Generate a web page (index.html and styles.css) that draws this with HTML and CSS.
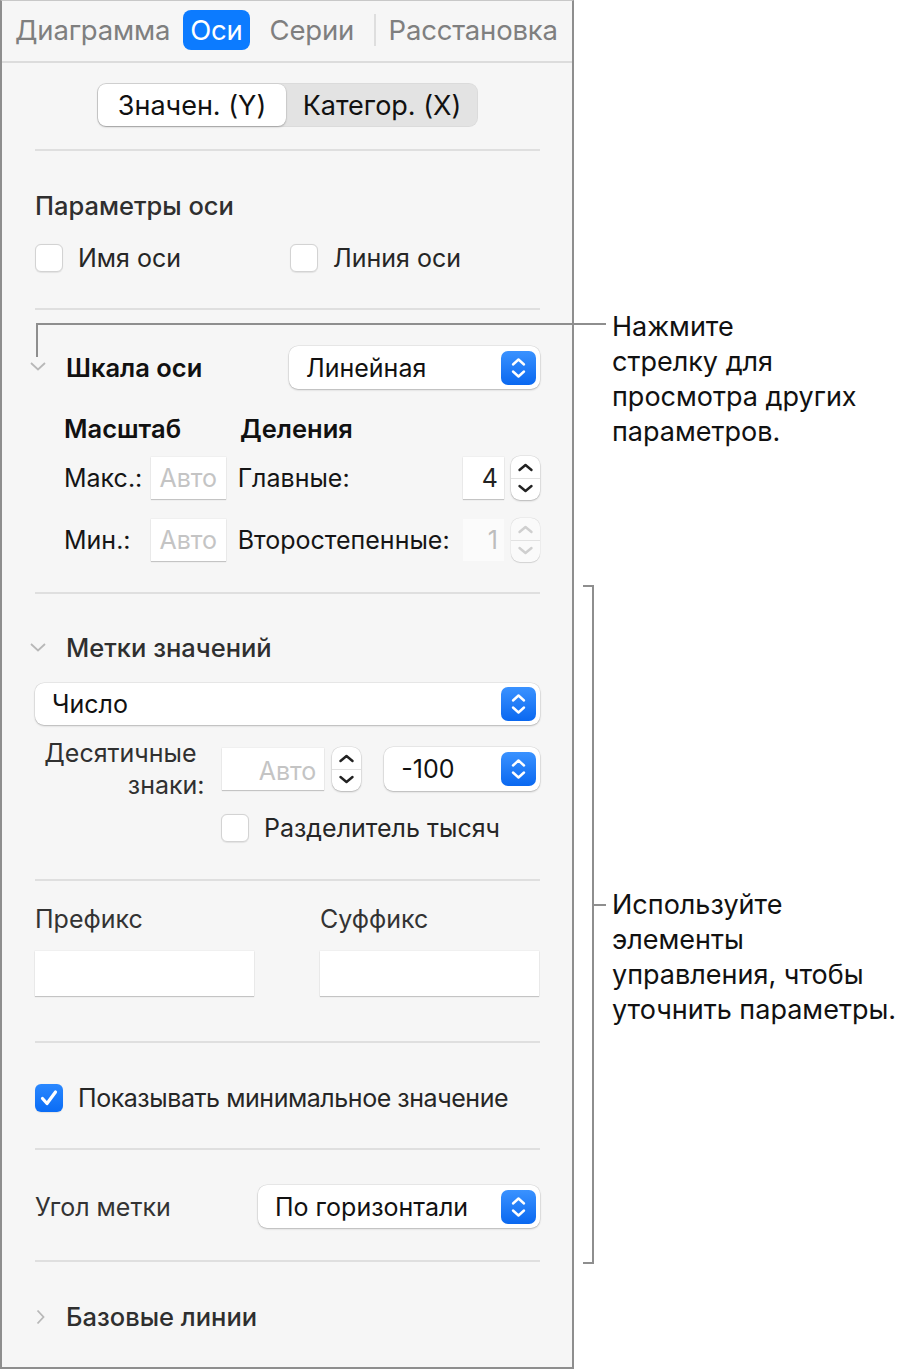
FILE: index.html
```html
<!DOCTYPE html>
<html lang="ru">
<head>
<meta charset="utf-8">
<title>Оси</title>
<link rel="stylesheet" href="styles.css">
</head>
<body>
<div class="page">
  <div class="panel">
    <div class="tabs">
      <span class="tab t1">Диаграмма</span>
      <span class="tab active">Оси</span>
      <span class="tab t3">Серии</span>
      <span class="tab-sep"></span>
      <span class="tab t4">Расстановка</span>
    </div>
    <div class="body">
      <div class="seg">
        <span class="seg-item on">Значен. (Y)</span>
        <span class="seg-item">Категор. (X)</span>
      </div>
      <div class="divider d-seg"></div>

      <div class="heading h-params">Параметры оси</div>
      <div class="check-row">
        <span class="check"><span class="box"></span>Имя оси</span>
        <span class="check c-right"><span class="box"></span>Линия оси</span>
      </div>
      <div class="divider d-params"></div>

      <div class="disc-row scale-row">
        <span class="chev-down"><svg width="16" height="9" viewBox="0 0 16 9"><path d="M1 1 L8 7.5 L15 1" fill="none" stroke="#b8b8b8" stroke-width="1.8"/></svg></span>
        <span class="bold-label">Шкала оси</span>
        <div class="popup pop-scale"><span class="pop-text">Линейная</span><span class="pop-btn"><svg width="35" height="34" viewBox="0 0 35 34"><path d="M12 13.5 L17.5 8.5 L23 13.5 M12 20.5 L17.5 25.5 L23 20.5" fill="none" stroke="#fff" stroke-width="2.4" stroke-linecap="round" stroke-linejoin="round"/></svg></span></div>
      </div>

      <div class="grid-head">
        <span class="bold-label gh1">Масштаб</span>
        <span class="bold-label">Деления</span>
      </div>
      <div class="num-row r-max">
        <span class="lbl l-short">Макс.:</span>
        <span class="field f-auto">Авто</span>
        <span class="lbl l-long">Главные:</span>
        <span class="field f-num">4</span>
        <span class="stepper"><svg width="29" height="44" viewBox="0 0 29 44"><path d="M8.5 14 L14.5 9 L20.5 14 M8.5 30 L14.5 35 L20.5 30" fill="none" stroke="#222" stroke-width="2.4" stroke-linecap="round" stroke-linejoin="round"/></svg></span>
      </div>
      <div class="num-row r-min">
        <span class="lbl l-short">Мин.:</span>
        <span class="field f-auto">Авто</span>
        <span class="lbl l-long">Второстепенные:</span>
        <span class="field f-num dis">1</span>
        <span class="stepper dis"><svg width="29" height="44" viewBox="0 0 29 44"><path d="M8.5 14 L14.5 9 L20.5 14 M8.5 30 L14.5 35 L20.5 30" fill="none" stroke="#cfcfcf" stroke-width="2.4" stroke-linecap="round" stroke-linejoin="round"/></svg></span>
      </div>
      <div class="divider d-scale"></div>

      <div class="disc-row labels-row">
        <span class="chev-down"><svg width="16" height="9" viewBox="0 0 16 9"><path d="M1 1 L8 7.5 L15 1" fill="none" stroke="#b8b8b8" stroke-width="1.8"/></svg></span>
        <span class="heading">Метки значений</span>
      </div>
      <div class="popup pop-number"><span class="pop-text">Число</span><span class="pop-btn"><svg width="35" height="34" viewBox="0 0 35 34"><path d="M12 13.5 L17.5 8.5 L23 13.5 M12 20.5 L17.5 25.5 L23 20.5" fill="none" stroke="#fff" stroke-width="2.4" stroke-linecap="round" stroke-linejoin="round"/></svg></span></div>

      <div class="dec-row">
        <span class="dec-label"><span class="dec-l1">Десятичные</span><span class="dec-l2">знаки:</span></span>
        <span class="field f-dec">Авто</span>
        <span class="stepper st-dec"><svg width="29" height="44" viewBox="0 0 29 44"><path d="M8.5 14 L14.5 9 L20.5 14 M8.5 30 L14.5 35 L20.5 30" fill="none" stroke="#222" stroke-width="2.4" stroke-linecap="round" stroke-linejoin="round"/></svg></span>
        <div class="popup pop-neg"><span class="pop-text">-100</span><span class="pop-btn"><svg width="35" height="34" viewBox="0 0 35 34"><path d="M12 13.5 L17.5 8.5 L23 13.5 M12 20.5 L17.5 25.5 L23 20.5" fill="none" stroke="#fff" stroke-width="2.4" stroke-linecap="round" stroke-linejoin="round"/></svg></span></div>
      </div>
      <div class="check-row thousands">
        <span class="check"><span class="box"></span>Разделитель тысяч</span>
      </div>
      <div class="divider d-dec"></div>

      <div class="fix-grid">
        <span class="plain-label">Префикс</span>
        <span class="plain-label">Суффикс</span>
        <span class="field f-wide"></span>
        <span class="field f-wide"></span>
      </div>
      <div class="divider d-fix"></div>

      <div class="check-row showmin">
        <span class="check"><span class="box on"><svg width="28" height="28" viewBox="0 0 28 28"><path d="M7.5 14.5 L12 19.5 L20.5 8" fill="none" stroke="#fff" stroke-width="3.2" stroke-linecap="round" stroke-linejoin="round"/></svg></span>Показывать минимальное значение</span>
      </div>
      <div class="divider d-min"></div>

      <div class="angle-row">
        <span class="plain-label">Угол метки</span>
        <div class="popup pop-angle"><span class="pop-text">По горизонтали</span><span class="pop-btn"><svg width="35" height="34" viewBox="0 0 35 34"><path d="M12 13.5 L17.5 8.5 L23 13.5 M12 20.5 L17.5 25.5 L23 20.5" fill="none" stroke="#fff" stroke-width="2.4" stroke-linecap="round" stroke-linejoin="round"/></svg></span></div>
      </div>
      <div class="divider d-angle"></div>

      <div class="disc-row base-row">
        <span class="chev-right"><svg width="9" height="16" viewBox="0 0 9 16"><path d="M1.5 1.5 L7.5 8 L1.5 14.5" fill="none" stroke="#b8b8b8" stroke-width="1.8"/></svg></span>
        <span class="heading">Базовые линии</span>
      </div>
    </div>
  </div>

  <div class="callout-line"></div>
  <div class="note note-top">Нажмите<br>стрелку для<br>просмотра других<br>параметров.</div>

  <div class="bracket"></div>
  <div class="bracket-tick"></div>
  <div class="note note-bottom">Используйте<br>элементы<br>управления, чтобы<br>уточнить параметры.</div>
</div>
</body>
</html>
```

FILE: styles.css
```css
html, body {
  margin: 0;
  padding: 0;
  background: #ffffff;
}

body {
  font-family: Inter, "Noto Sans", "Liberation Sans", sans-serif;
  color: #1a1a1a;
}

.page {
  position: relative;
  width: 910px;
  height: 1370px;
}

.panel {
  box-sizing: border-box;
  width: 574px;
  height: 1369px;
  background: #f6f6f6;
  border: 2px solid #8e8e8e;
  border-top: 1px solid #c8c8c8;
}

/* ---------- tabs ---------- */
.tabs {
  height: 62px;
  box-sizing: border-box;
  padding: 0 0 3px 13px;
  border-bottom: 2px solid #dcdcdc;
  display: flex;
  align-items: center;
}

.tab {
  font-size: 27.5px;
  color: #7f7f7f;
  letter-spacing: -0.2px;
}

.tab.active {
  margin-left: 13px;
  background: #0c7bff;
  color: #ffffff;
  border-radius: 8px;
  height: 40px;
  line-height: 40px;
  padding: 0 7px;
}

.tab.t3 {
  margin-left: 20px;
}

.tab-sep {
  width: 1.5px;
  height: 32px;
  background: #dedede;
  margin-left: 20px;
}

.tab.t4 {
  margin-left: 13px;
}

/* ---------- body ---------- */
.body {
  padding: 0 32px 0 33px;
}

.seg {
  margin: 20px auto 0;
  width: 381px;
  height: 44px;
  background: #e3e3e3;
  border-radius: 9px;
  display: flex;
  box-shadow: inset 0 0 0 1px rgba(0,0,0,0.03);
}

.seg-item {
  flex: 1 1 0;
  display: flex;
  align-items: center;
  justify-content: center;
  font-size: 27px;
  color: #111;
}

.seg-item.on {
  flex: 0 0 188px;
  background: #ffffff;
  border-radius: 8px;
  margin: 1px 0 1px 1px;
  box-shadow: 0 1px 2px rgba(0,0,0,0.25), 0 0 0 0.5px rgba(0,0,0,0.08);
}

.divider {
  height: 2px;
  background: #dfdfdf;
}

.d-seg { margin-top: 22px; }
.d-params { margin-top: 35px; }
.d-scale { margin-top: 31px; }
.d-dec { margin-top: 36px; }
.d-fix { margin-top: 45px; }
.d-min { margin-top: 35px; }
.d-angle { margin-top: 32px; }

.heading {
  font-size: 25.5px;
  font-weight: 500;
  color: #2f2f2f;
  line-height: 30px;
}

.h-params {
  margin-top: 40px;
}

.check-row {
  display: flex;
  align-items: center;
  height: 30px;
  margin-top: 22px;
}

.check {
  display: inline-flex;
  align-items: center;
  font-size: 25px;
  color: #262626;
}

.c-right {
  margin-left: 109px;
}

.box {
  box-sizing: border-box;
  width: 28px;
  height: 28px;
  border-radius: 6px;
  background: #ffffff;
  border: 1px solid #d3d3d3;
  box-shadow: 0 0.5px 1px rgba(0,0,0,0.08);
  margin-right: 15px;
  display: inline-flex;
}

.box.on {
  background: linear-gradient(#2a88ff, #0a6cf5);
  border: none;
}

/* disclosure rows */
.disc-row {
  display: flex;
  align-items: center;
  margin-left: -5px;
}

.chev-down {
  width: 16px;
  display: inline-flex;
  margin-right: 20px;
  margin-top: -2px;
}

.chev-right {
  width: 9px;
  display: inline-flex;
  margin-left: 6px;
  margin-right: 21px;
}

.scale-row {
  margin-top: 36px;
  height: 43px;
}

.bold-label {
  font-size: 25px;
  font-weight: 600;
  color: #111;
}

.scale-row .bold-label {
  font-size: 25.5px;
}

.popup {
  box-sizing: border-box;
  height: 43px;
  background: #ffffff;
  border-radius: 9px;
  box-shadow: 0 1px 2px rgba(0,0,0,0.22), 0 0 0 0.5px rgba(0,0,0,0.1);
  display: flex;
  align-items: center;
  justify-content: space-between;
  padding-left: 17px;
  padding-right: 4px;
}

.pop-text {
  font-size: 25px;
  color: #111;
}

.pop-btn {
  width: 35px;
  height: 34px;
  border-radius: 7px;
  background: linear-gradient(#3a92ff, #0a68f0);
  display: inline-flex;
}

.pop-scale {
  margin-left: auto;
  width: 251px;
}

.grid-head {
  display: flex;
  align-items: center;
  height: 30px;
  margin-top: 24px;
  padding-left: 29px;
}

.grid-head .bold-label {
  font-size: 25.5px;
}

.gh1 {
  width: 176px;
}

.num-row {
  display: flex;
  align-items: center;
  height: 42px;
  padding-left: 29px;
}

.r-max { margin-top: 14px; }
.r-min { margin-top: 20px; }

.lbl {
  font-size: 25px;
  color: #151515;
}

.l-short {
  width: 87px;
}

.l-long {
  margin-left: 12px;
  width: 226px;
}

.field {
  box-sizing: border-box;
  height: 42px;
  background: #ffffff;
  box-shadow: 0 1px 1px rgba(0,0,0,0.18), 0 0 0 0.5px rgba(0,0,0,0.05);
  font-size: 25px;
  display: inline-flex;
  align-items: center;
}

.f-auto {
  width: 75px;
  justify-content: center;
  color: #c4c4c4;
}

.f-num {
  width: 41px;
  justify-content: flex-end;
  padding-right: 6px;
  color: #222;
}

.f-num.dis {
  color: #bdbdbd;
  background: #fbfbfb;
  box-shadow: none;
}

.stepper {
  box-sizing: border-box;
  width: 29px;
  height: 44px;
  margin-left: 7px;
  border-radius: 9px;
  background: #ffffff;
  box-shadow: 0 1px 2px rgba(0,0,0,0.22), 0 0 0 0.5px rgba(0,0,0,0.1);
  position: relative;
  display: inline-flex;
}

.stepper::after {
  content: "";
  position: absolute;
  left: 0;
  right: 0;
  top: 21.5px;
  height: 1px;
  background: #e2e2e2;
}

.stepper.dis {
  background: #fafafa;
  box-shadow: 0 0.5px 1px rgba(0,0,0,0.12), 0 0 0 0.5px rgba(0,0,0,0.06);
}

.labels-row {
  margin-top: 39px;
  height: 30px;
}

.pop-number {
  margin-top: 20px;
  width: 505px;
  height: 42px;
}

.dec-row {
  display: flex;
  align-items: center;
  margin-top: 22px;
  height: 44px;
}

.dec-label {
  width: 170px;
  display: flex;
  flex-direction: column;
  align-items: flex-end;
  font-size: 25px;
  line-height: 32px;
  color: #303030;
}

.dec-l1 {
  margin-right: 8px;
}

.f-dec {
  margin-left: 17px;
  width: 103px;
  justify-content: flex-end;
  padding: 4px 8px 0 0;
  color: #c4c4c4;
}

.st-dec {
  margin-left: 8px;
}

.pop-neg {
  margin-left: 23px;
  width: 156px;
  height: 44px;
}

.thousands {
  padding-left: 186px;
}

.fix-grid {
  display: grid;
  grid-template-columns: 219px 219px;
  column-gap: 66px;
  grid-template-rows: 30px 45px;
  row-gap: 17px;
  margin-top: 23px;
}

.plain-label {
  font-size: 25px;
  color: #333;
  line-height: 30px;
}

.f-wide {
  height: 45px;
  width: 219px;
}

.showmin {
  margin-top: 40px;
}

.showmin .check {
  letter-spacing: -0.45px;
}

.angle-row {
  display: flex;
  align-items: center;
  margin-top: 35px;
  height: 43px;
}

.pop-angle {
  margin-left: auto;
  width: 282px;
}

.base-row {
  margin-top: 40px;
  height: 30px;
}

/* ---------- annotations ---------- */
.callout-line {
  position: absolute;
  left: 36px;
  top: 323px;
  width: 568px;
  height: 32px;
  border-top: 2px solid #8e8e8e;
  border-left: 2px solid #8e8e8e;
}

.note {
  position: absolute;
  left: 612px;
  font-size: 27px;
  line-height: 35px;
  color: #111;
}

.note-top {
  top: 309px;
}

.bracket {
  position: absolute;
  left: 583px;
  top: 585px;
  width: 9px;
  height: 675px;
  border-top: 2px solid #8e8e8e;
  border-right: 2px solid #8e8e8e;
  border-bottom: 2px solid #8e8e8e;
}

.bracket-tick {
  position: absolute;
  left: 594px;
  top: 904px;
  width: 12px;
  height: 2px;
  background: #8e8e8e;
}

.note-bottom {
  top: 887px;
}
```
